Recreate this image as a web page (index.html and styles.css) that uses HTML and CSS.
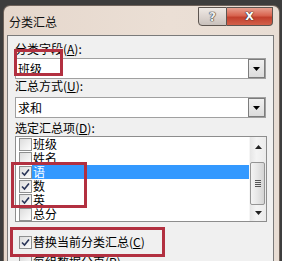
FILE: index.html
```html
<!DOCTYPE html>
<html lang="zh">
<head>
<meta charset="utf-8">
<link rel="stylesheet" href="styles.css">
</head>
<body>
<div class="screen">
  <div class="win">
    <div class="titlebar">
      <span class="title">分类汇总</span>
      <div class="caps">
        <span class="cap help">?</span>
        <span class="cap close">X</span>
      </div>
    </div>
    <div class="client">
      <div class="label l1">分类字段(<u>A</u>):</div>
      <div class="combo c1">
        <span class="val">班级</span>
        <span class="drop"><svg width="7" height="4" viewBox="0 0 7 4"><path d="M0 0H7L3.5 4Z" fill="#000"/></svg></span>
      </div>
      <div class="label l2">汇总方式(<u>U</u>):</div>
      <div class="combo c2">
        <span class="val">求和</span>
        <span class="drop"><svg width="7" height="4" viewBox="0 0 7 4"><path d="M0 0H7L3.5 4Z" fill="#000"/></svg></span>
      </div>
      <div class="label l3">选定汇总项(<u>D</u>):</div>
      <div class="listbox">
        <div class="items">
          <div class="item"><span class="cb"></span><span class="txt">班级</span></div>
          <div class="item"><span class="cb"></span><span class="txt">姓名</span></div>
          <div class="item sel"><span class="cb on"><svg width="9" height="9" viewBox="0 0 9 9"><path d="M1 4.5L3.5 7L8 1.5" fill="none" stroke="#2a3558" stroke-width="1.6"/></svg></span><span class="txt">语</span></div>
          <div class="item"><span class="cb on"><svg width="9" height="9" viewBox="0 0 9 9"><path d="M1 4.5L3.5 7L8 1.5" fill="none" stroke="#2a3558" stroke-width="1.6"/></svg></span><span class="txt">数</span></div>
          <div class="item"><span class="cb on"><svg width="9" height="9" viewBox="0 0 9 9"><path d="M1 4.5L3.5 7L8 1.5" fill="none" stroke="#2a3558" stroke-width="1.6"/></svg></span><span class="txt">英</span></div>
          <div class="item"><span class="cb"></span><span class="txt">总分</span></div>
        </div>
        <div class="vscroll">
          <span class="sbtn up"><svg width="7" height="4" viewBox="0 0 7 4"><path d="M0 4H7L3.5 0Z" fill="#222"/></svg></span>
          <span class="thumb"><span class="grip"></span><span class="grip"></span><span class="grip"></span><span class="grip"></span></span>
          <span class="sbtn down"><svg width="7" height="4" viewBox="0 0 7 4"><path d="M0 0H7L3.5 4Z" fill="#222"/></svg></span>
        </div>
      </div>
      <div class="opt o1"><span class="cb on"><svg width="9" height="9" viewBox="0 0 9 9"><path d="M1 4.5L3.5 7L8 1.5" fill="none" stroke="#2a3558" stroke-width="1.6"/></svg></span><span class="otxt">替换当前分类汇总(<u>C</u>)</span></div>
      <div class="opt o2"><span class="cb"></span><span class="otxt">每组数据分页(<u>P</u>)</span></div>
    </div>
  </div>
  <div class="mark m1"></div>
  <div class="mark m2"></div>
  <div class="mark m3"></div>
</div>
</body>
</html>
```

FILE: styles.css
```css
html, body {
  margin: 0;
  padding: 0;
}
body {
  width: 282px;
  height: 261px;
  overflow: hidden;
  background: #3d3d3d;
  font-family: "Noto Sans CJK SC", "Noto Sans", sans-serif;
  font-size: 12px;
  color: #000;
}
.screen {
  position: relative;
  width: 282px;
  height: 261px;
  overflow: hidden;
  background: #3d3d3d;
}
.win {
  box-sizing: border-box;
  margin: 5px 2px 0 3px;
  height: 256px;
  border: 1px solid #6e625a;
  border-bottom: none;
  border-radius: 7px 7px 0 0;
  background: linear-gradient(90deg, #e5d7cc 0%, #ebdfd5 60%, #e8ddd4 100%);
  padding: 0 5px 0 3px;
  overflow: hidden;
}
.titlebar {
  height: 29px;
  display: flex;
  justify-content: space-between;
  align-items: flex-start;
  padding-left: 2px;
}
.title {
  margin-top: 9px;
  line-height: 14px;
  color: #111;
}
.caps {
  display: flex;
  margin-top: 1px;
  margin-right: 1px;
}
.cap {
  box-sizing: border-box;
  height: 19px;
  border: 1px solid #5d5550;
  display: flex;
  align-items: center;
  justify-content: center;
  font-family: "DejaVu Sans", sans-serif;
  font-weight: bold;
  color: #fff;
  text-shadow: 0 0 1px #333, 0 0 1px #333, 0 0 1px #333;
}
.help {
  width: 29px;
  border-radius: 0 0 0 4px;
  background: linear-gradient(#efe9e5, #ddd5d0 50%, #c9c1bc);
  font-size: 12px;
  color: #eee;
}
.close {
  width: 46px;
  border-left: none;
  border-radius: 0 0 4px 0;
  background: linear-gradient(#e9a090, #d8634f 45%, #c2402d 55%, #d2604a);
  font-size: 11px;
}
.client {
  box-sizing: border-box;
  height: 240px;
  border: 1px solid #7a7a7a;
  border-bottom: none;
  background: #f0f0f0;
  padding-left: 7px;
  overflow: hidden;
}
.label {
  line-height: 14px;
  height: 14px;
  white-space: nowrap;
}
.l1 { margin-top: 6px; }
.l2 { margin-top: 0; }
.l3 { margin-top: 3px; }
.combo {
  box-sizing: border-box;
  width: 251px;
  height: 21px;
  border: 1px solid #a0a0a0;
  background: #fff;
  display: flex;
  align-items: center;
  justify-content: space-between;
}
.c1 { margin-top: 2px; }
.c2 { margin-top: 4px; }
.val {
  padding-left: 2px;
  line-height: 14px;
}
.drop {
  box-sizing: border-box;
  width: 17px;
  height: 19px;
  border: 1px solid #7c7c7c;
  background: linear-gradient(#f0f0f0, #dcdcdc);
  display: flex;
  align-items: center;
  justify-content: center;
}
.listbox {
  box-sizing: border-box;
  margin-top: 1px;
  width: 252px;
  height: 86px;
  border: 1px solid #8d8d8d;
  background: #fff;
  display: flex;
}
.items {
  flex: 1;
  display: flex;
  flex-direction: column;
}
.item {
  height: 14px;
  display: flex;
  align-items: center;
  padding-left: 3px;
}
.cb {
  box-sizing: border-box;
  width: 13px;
  height: 13px;
  flex: none;
  border: 1px solid #8e8f8f;
  background: linear-gradient(135deg, #dcdcdc, #fdfdfd);
  display: flex;
  align-items: center;
  justify-content: center;
}
.txt {
  flex: 1;
  height: 14px;
  line-height: 14px;
  padding-left: 1px;
}
.sel .txt {
  background: #3399ff;
  color: #fff;
}
.vscroll {
  width: 17px;
  flex: none;
  display: flex;
  flex-direction: column;
  background: linear-gradient(90deg, #e6e6e6, #f4f4f4 40%, #ebebeb);
  border-left: 1px solid #f6f6f6;
  box-sizing: border-box;
}
.sbtn {
  display: flex;
  justify-content: center;
}
.up {
  height: 25px;
  align-items: flex-start;
  padding-top: 8px;
  box-sizing: border-box;
}
.down {
  flex: 1;
  align-items: center;
}
.thumb {
  box-sizing: border-box;
  height: 43px;
  margin: 0 1px 0 0;
  border: 1px solid #959595;
  border-radius: 2px;
  background: linear-gradient(90deg, #f4f4f4, #e6e6e6 50%, #d4d4d4);
  display: flex;
  flex-direction: column;
  align-items: center;
  justify-content: center;
  gap: 1px;
}
.grip {
  width: 6px;
  height: 1px;
  background: #555;
}
.opt {
  height: 14px;
  display: flex;
  align-items: center;
  padding-left: 4px;
  white-space: nowrap;
}
.o1 { margin-top: 13px; }
.o2 { margin-top: 6px; }
.otxt {
  padding-left: 1px;
  line-height: 14px;
}
.mark {
  position: absolute;
  box-sizing: border-box;
  border: 3px solid #b23040;
}
.m1 { left: 14px; top: 49px; width: 49px; height: 27px; }
.m2 { left: 11px; top: 162px; width: 76px; height: 46px; }
.m3 { left: 10px; top: 227px; width: 155px; height: 30px; }
```
